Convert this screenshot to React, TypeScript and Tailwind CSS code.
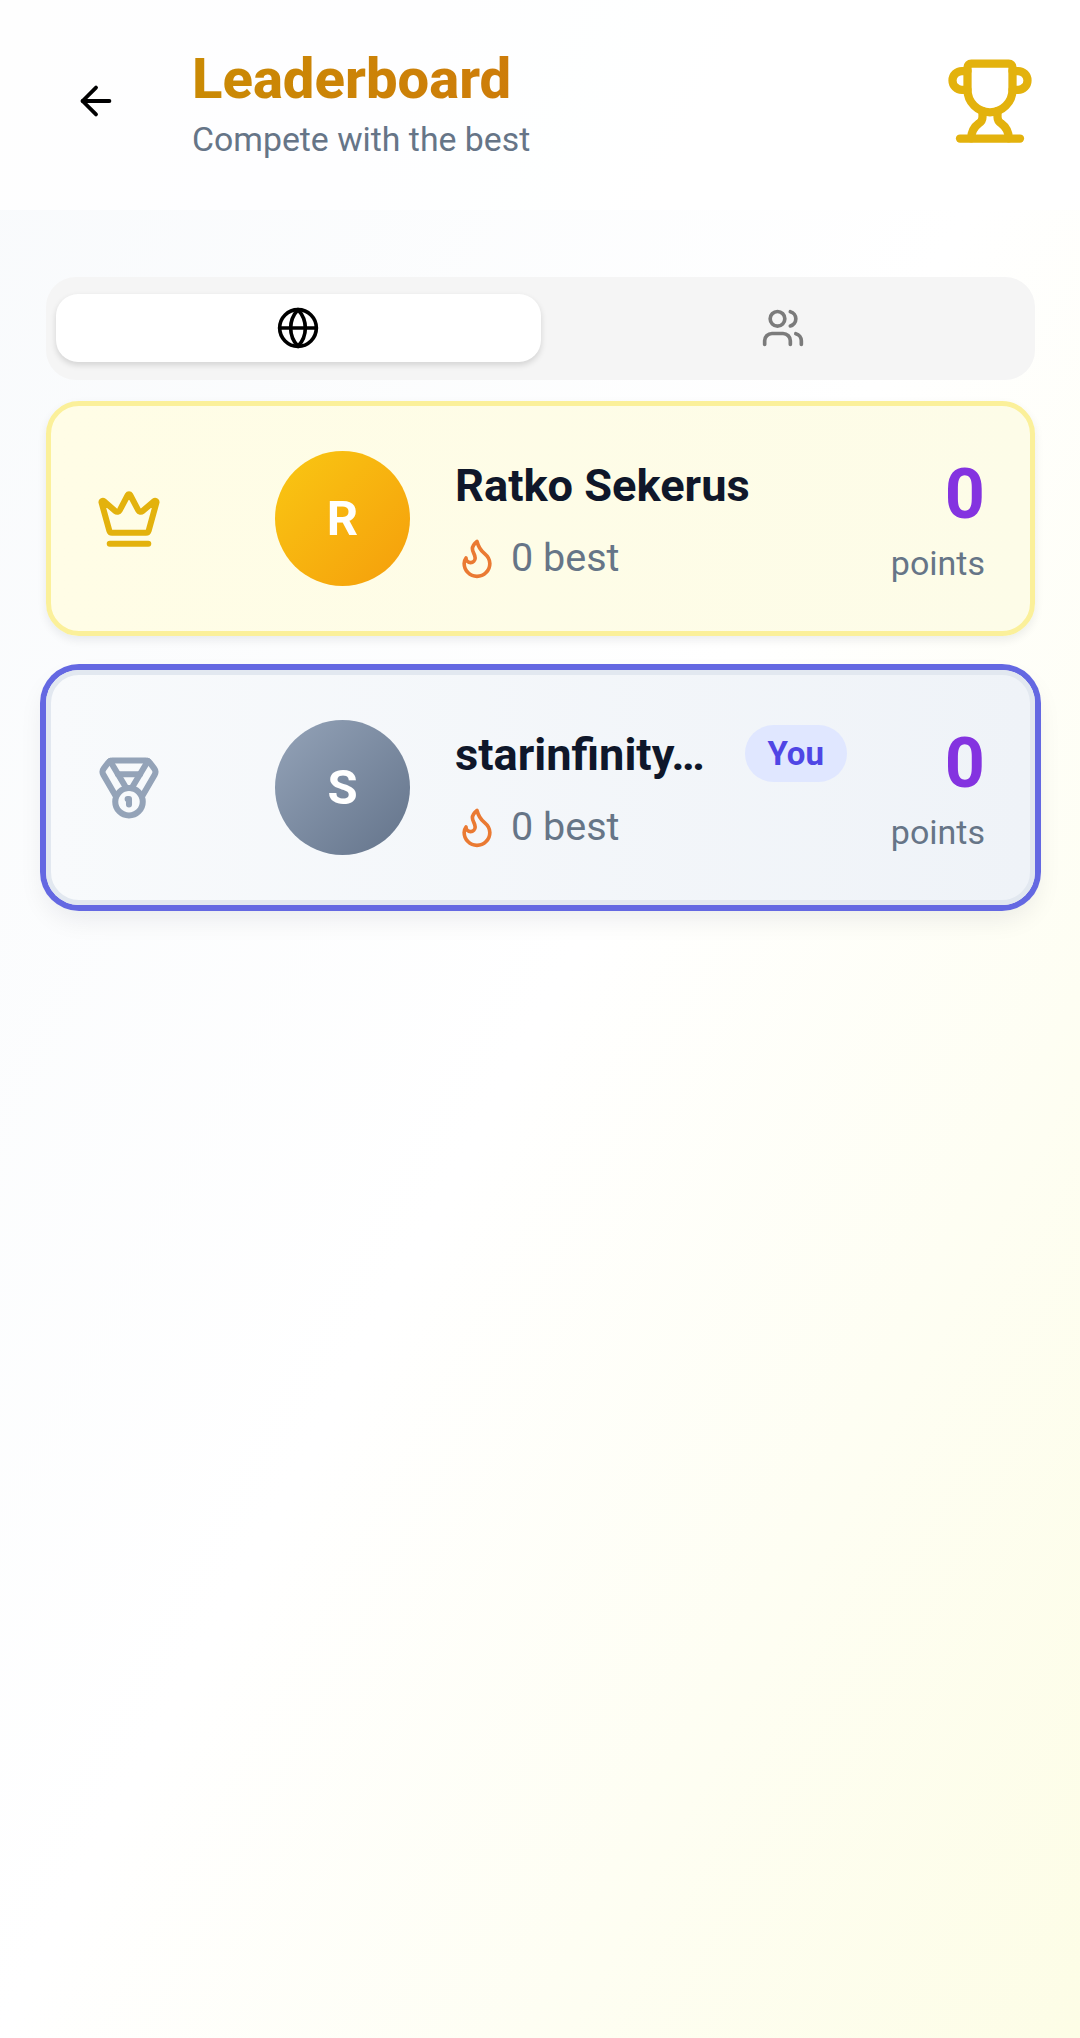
import React from 'react';
import { ArrowLeft, Crown, Flame, Globe, Medal, Trophy, Users } from 'lucide-react';

type Player = {
  name: string;
  initial: string;
  best: number;
  points: number;
  you?: boolean;
};

const PlayerCard: React.FC<{ player: Player }> = ({ player }) => {
  const isYou = player.you;
  return (
    <div
      className={`flex h-[235px] items-center rounded-[33px] border-[5px] pl-[42px] pr-[45px] ${
        isYou
          ? 'border-[#e2e8f0] bg-gradient-to-r from-[#f8fafc] to-[#eff3f8] shadow-[0_12px_28px_rgba(15,23,42,0.09)] ring-[6px] ring-[#6468e2]'
          : 'border-[#fbf09a] bg-gradient-to-r from-[#fffde6] to-[#fdfce8] shadow-[0_4px_10px_rgba(15,23,42,0.08)]'
      }`}
    >
      <div className="flex w-[72px] shrink-0 justify-center">
        {isYou ? (
          <Medal size={66} strokeWidth={2.2} className="text-[#94a3b8]" />
        ) : (
          <Crown size={66} strokeWidth={2.2} className="text-[#e3b20d]" />
        )}
      </div>
      <div
        className={`ml-[110px] flex h-[135px] w-[135px] shrink-0 items-center justify-center rounded-full text-[49px] font-bold text-white ${
          isYou
            ? 'bg-gradient-to-br from-[#94a3b8] to-[#64748b]'
            : 'bg-gradient-to-br from-[#f9c713] to-[#f59e0b]'
        }`}
      >
        {player.initial}
      </div>
      <div className="ml-[45px] mt-[2px] min-w-0 flex-1">
        <div className="flex items-center">
          <span className="truncate text-[45.2px] font-bold leading-[56px] text-[#0f172a]">{player.name}</span>
          {isYou && (
            <span className="ml-[40px] mt-[-2px] flex h-[57px] w-[102px] shrink-0 items-center justify-center rounded-full bg-[#e0e7ff] text-[33px] font-bold text-[#4f46e5]">
              You
            </span>
          )}
        </div>
        <div className="mt-[20px] flex items-center text-[39.5px] leading-[48px] text-[#667587]">
          <Flame size={44} className="shrink-0 text-[#ea7a33]" />
          <span className="ml-[12px]">{player.best} best</span>
        </div>
      </div>
      <div className="mt-[6px] shrink-0 text-right">
        <div className="text-[70px] font-bold leading-[72px] text-[#8433e0]">{player.points}</div>
        <div className="mt-[11px] text-[34px] leading-[44px] text-[#667587]">points</div>
      </div>
    </div>
  );
};

const players: Player[] = [
  { name: 'Ratko Sekerus', initial: 'R', best: 0, points: 0 },
  { name: 'starinfinity…', initial: 'S', best: 0, points: 0, you: true },
];

export default function App() {
  return (
    <div className="flex min-h-[2038px] flex-col bg-gradient-to-br from-[#f8fafc] via-white to-[#fdfde6] font-['Roboto',sans-serif]">
      <header className="flex h-[210px] items-center bg-white/80 pb-[8px] pl-[73px] pr-[45px]">
        <ArrowLeft size={46} className="shrink-0 text-black" />
        <div className="ml-[73px] mt-[5px] flex-1">
          <h1 className="bg-gradient-to-r from-[#ca8a04] to-[#d1690f] bg-clip-text text-[56.2px] font-extrabold leading-[66px] text-transparent">
            Leaderboard
          </h1>
          <p className="mt-[6px] text-[33.8px] leading-[44px] text-[#667587]">Compete with the best</p>
        </div>
        <Trophy size={90} strokeWidth={2.2} className="shrink-0 text-[#e3b20d]" />
      </header>

      <main className="pl-[46px] pr-[45px] pt-[67px]">
        <div className="flex h-[103px] items-center rounded-[30px] bg-[#f5f5f5] px-[10px] pb-[1px]">
          <button className="flex h-[68px] flex-1 items-center justify-center rounded-[22px] bg-white shadow-[0_3px_6px_rgba(0,0,0,0.14)]">
            <Globe size={44} className="text-black" />
          </button>
          <button className="flex h-[68px] flex-1 items-center justify-center">
            <Users size={44} className="text-[#7b7b7b]" />
          </button>
        </div>

        <div className="mt-[21px] flex flex-col gap-[34px]">
          {players.map((player) => (
            <PlayerCard key={player.initial} player={player} />
          ))}
        </div>
      </main>
    </div>
  );
}
